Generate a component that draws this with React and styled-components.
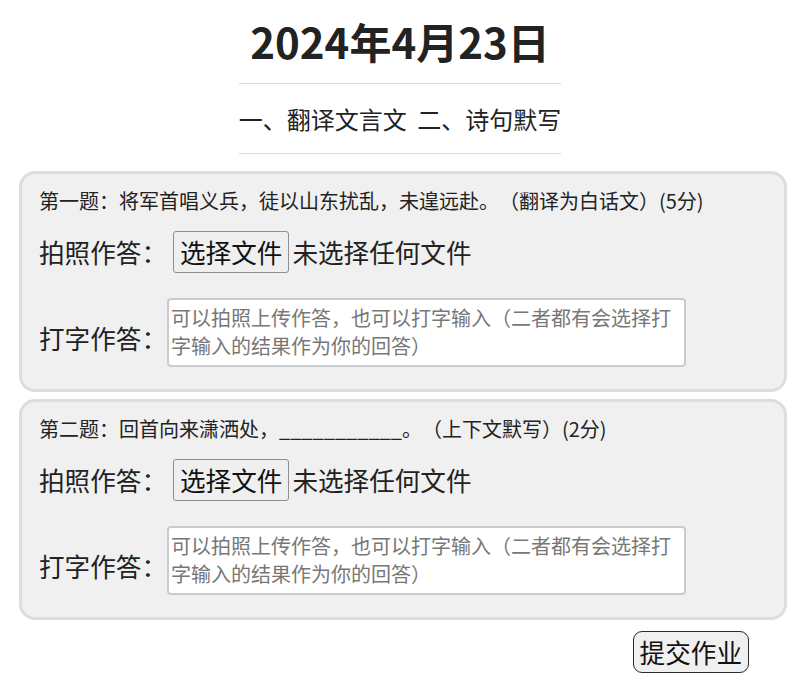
import React from "react";
import styled, { createGlobalStyle } from "styled-components";

const GlobalStyle = createGlobalStyle`
  html, body {
    margin: 0;
    padding: 0;
    background: #ffffff;
  }
  body {
    font-family: "Noto Sans CJK SC", "Noto Sans", sans-serif;
    color: #222;
    text-spacing-trim: space-all;
  }
  * { box-sizing: border-box; }
`;

const Page = styled.div`
  width: 800px;
  padding-top: 11px;
  display: flex;
  flex-direction: column;
`;

const Title = styled.h1`
  margin: 0;
  font-size: 42px;
  line-height: 60px;
  font-weight: 700;
  text-align: center;
  color: #222;
`;

const NavWrap = styled.div`
  display: flex;
  justify-content: center;
  margin-top: 12px;
`;

const Nav = styled.nav`
  border-top: 1px solid #dcdcdc;
  border-bottom: 1px solid #dcdcdc;
  padding: 17px 0;
  font-size: 24px;
  line-height: 35px;
  color: #222;
  white-space: nowrap;
  word-spacing: 5px;
  text-spacing-trim: space-all;
`;

const Card = styled.section`
  margin: ${(p) => p.$top}px 0 0 19px;
  width: 768px;
  background: #f0f0f0;
  border: 3px solid #dddddd;
  border-radius: 16px;
  padding: 12px 0 22px 17px;
  display: flex;
  flex-direction: column;
`;

const Question = styled.div`
  font-size: 20px;
  line-height: 30px;
  color: #222;
  margin-bottom: 15px;
  white-space: nowrap;
  text-spacing-trim: space-all;
`;

const Row = styled.div`
  display: flex;
  align-items: center;
  margin-bottom: ${(p) => p.$mb || 0}px;
`;

const Label = styled.span`
  font-size: 25.6px;
  line-height: 36px;
  color: #222;
  white-space: nowrap;
  margin-top: ${(p) => p.$shift || 0}px;
  margin-right: ${(p) => p.$mr || 0}px;
`;

const FileButton = styled.button`
  font-family: inherit;
  font-size: 25.6px;
  line-height: 36px;
  height: 42px;
  padding: 0 6px;
  background: #efefef;
  color: #111;
  border: 1px solid #8f8f8f;
  border-radius: 3px;
`;

const FileStatus = styled.span`
  font-size: 25.6px;
  line-height: 36px;
  margin-left: 3px;
  color: #222;
  white-space: nowrap;
`;

const Answer = styled.textarea`
  width: 519px;
  height: 69px;
  font-family: inherit;
  font-size: 20px;
  line-height: 28px;
  padding: 4px 2px;
  border: 2px solid #cbcbcb;
  border-radius: 4px;
  background: #fff;
  resize: none;
  margin: 0;
  &::placeholder {
    color: #777;
  }
`;

const Footer = styled.div`
  display: flex;
  justify-content: flex-end;
  padding-right: 51px;
  margin-top: 11px;
`;

const Submit = styled.button`
  font-family: inherit;
  font-size: 25.6px;
  line-height: 36px;
  height: 42px;
  padding: 0 6px;
  background: #f0f0f0;
  color: #111;
  border: 1.5px solid #2a2a2a;
  border-radius: 9px;
`;

const questions = [
  {
    text: "第一题：将军首唱义兵，徒以山东扰乱，未遑远赴。（翻译为白话文）(5分)",
    top: 17,
  },
  {
    text: "第二题：回首向来潇洒处，___________。（上下文默写）(2分)",
    top: 7,
  },
];

const placeholder =
  "可以拍照上传作答，也可以打字输入（二者都有会选择打字输入的结果作为你的回答）";

export default function App() {
  return (
    <>
      <GlobalStyle />
      <Page>
        <Title>2024年4月23日</Title>
        <NavWrap>
          <Nav>一、翻译文言文 二、诗句默写</Nav>
        </NavWrap>
        {questions.map((q, i) => (
          <Card key={i} $top={q.top}>
            <Question>{q.text}</Question>
            <Row $mb={25}>
              <Label $mr={6}>拍照作答：</Label>
              <FileButton type="button">选择文件</FileButton>
              <FileStatus>未选择任何文件</FileStatus>
            </Row>
            <Row>
              <Label $shift={10}>打字作答：</Label>
              <Answer placeholder={placeholder} />
            </Row>
          </Card>
        ))}
        <Footer>
          <Submit type="button">提交作业</Submit>
        </Footer>
      </Page>
    </>
  );
}
